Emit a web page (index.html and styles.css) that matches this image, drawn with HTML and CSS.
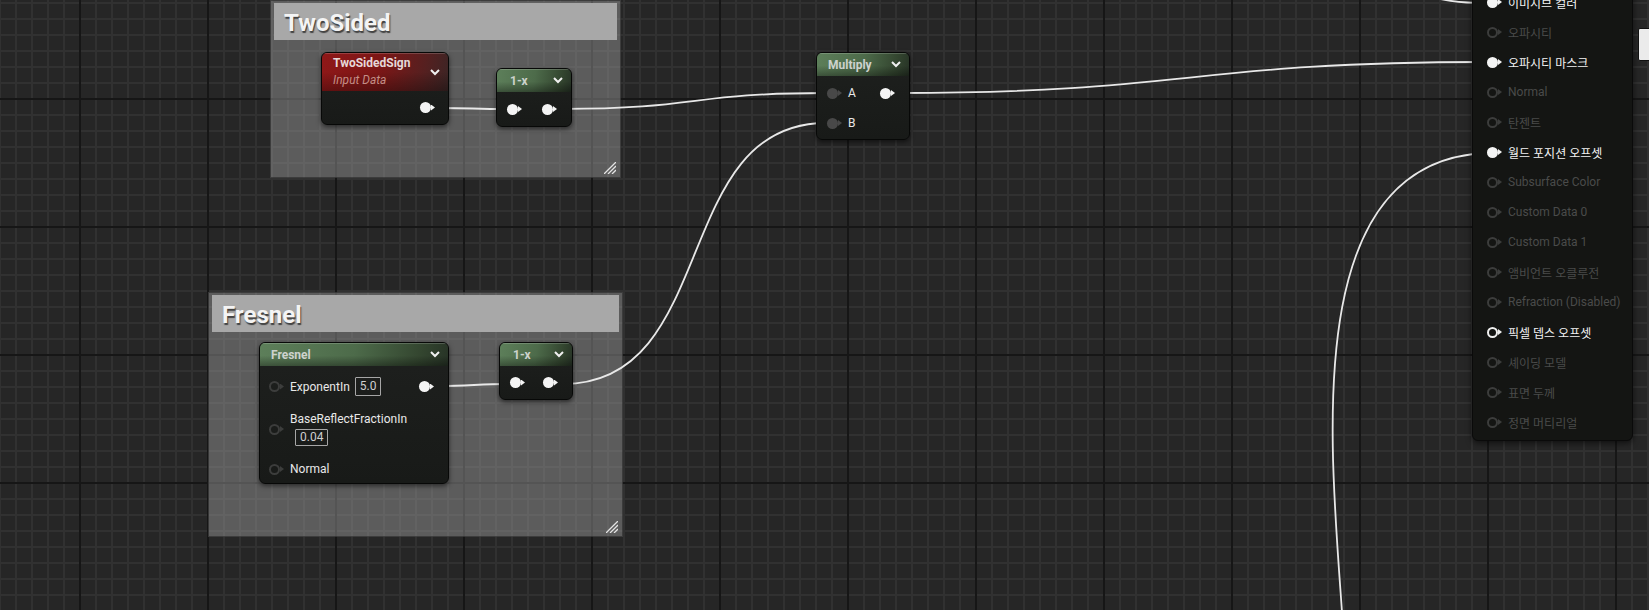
FILE: index.html
```html
<!DOCTYPE html>
<html lang="ko">
<head>
  <meta charset="UTF-8">
  <title>Material Graph</title>
  <link rel="stylesheet" href="styles.css">
</head>
<body>
  <div class="graph">

    <!-- comment boxes -->
    <div class="comment comment-twosided">
      <div class="comment-title">TwoSided</div>
      <div class="comment-body">
        <svg class="grip" width="12" height="12" viewBox="0 0 12 12"><path d="M12 0 L0 12 M12 4 L4 12 M12 8 L8 12"/></svg>
      </div>
    </div>
    <div class="comment comment-fresnel">
      <div class="comment-title">Fresnel</div>
      <div class="comment-body">
        <svg class="grip" width="12" height="12" viewBox="0 0 12 12"><path d="M12 0 L0 12 M12 4 L4 12 M12 8 L8 12"/></svg>
      </div>
    </div>

    <!-- wires -->
    <svg class="wires" width="1649" height="610" viewBox="0 0 1649 610">
      <path d="M439 108 C470 108 475 109 507 109"/>
      <path d="M561 109 C700 109 690 93 826 93"/>
      <path d="M439 386 C470 386 478 384 509 384"/>
      <path d="M563 384 C720 384 670 123 826 123"/>
      <path d="M899 93 C1190 93 1190 62 1487 62"/>
      <path d="M1400 -10 C1440 -1 1450 3 1487 3"/>
      <path d="M1342 612 C1330 440 1300 160 1487 153"/>
    </svg>

    <!-- TwoSidedSign -->
    <div class="node node-sign">
      <div class="node-head head-red">
        <div class="head-text">
          <span class="node-title">TwoSidedSign</span>
          <span class="node-sub">Input Data</span>
        </div>
        <svg class="chevron" width="10" height="7" viewBox="0 0 10 7"><path d="M1 1 L5 5 L9 1"/></svg>
      </div>
      <div class="node-body body-out">
        <span class="pin"></span>
      </div>
    </div>

    <!-- 1-x (top) -->
    <div class="node node-oneminus-a">
      <div class="node-head head-green">
        <span class="node-title">1-x</span>
        <svg class="chevron" width="10" height="7" viewBox="0 0 10 7"><path d="M1 1 L5 5 L9 1"/></svg>
      </div>
      <div class="node-body body-pair">
        <span class="pin"></span>
        <span class="pin"></span>
      </div>
    </div>

    <!-- Multiply -->
    <div class="node node-multiply">
      <div class="node-head head-green">
        <span class="node-title">Multiply</span>
        <svg class="chevron" width="10" height="7" viewBox="0 0 10 7"><path d="M1 1 L5 5 L9 1"/></svg>
      </div>
      <div class="node-body body-rows">
        <div class="pin-row">
          <span class="pin-label"><span class="pin dim"></span>A</span>
          <span class="pin"></span>
        </div>
        <div class="pin-row">
          <span class="pin-label"><span class="pin dim"></span>B</span>
        </div>
      </div>
    </div>

    <!-- Fresnel -->
    <div class="node node-fresnel">
      <div class="node-head head-green">
        <span class="node-title">Fresnel</span>
        <svg class="chevron" width="10" height="7" viewBox="0 0 10 7"><path d="M1 1 L5 5 L9 1"/></svg>
      </div>
      <div class="node-body body-fresnel">
        <div class="fresnel-row">
          <span class="pin-label"><span class="pin off"></span>ExponentIn <span class="value">5.0</span></span>
          <span class="pin"></span>
        </div>
        <div class="fresnel-row">
          <span class="pin-label"><span class="pin off"></span>
            <span class="stack">BaseReflectFractionIn<span class="value small">0.04</span></span>
          </span>
        </div>
        <div class="fresnel-row">
          <span class="pin-label"><span class="pin off"></span>Normal</span>
        </div>
      </div>
    </div>

    <!-- 1-x (bottom) -->
    <div class="node node-oneminus-b">
      <div class="node-head head-green">
        <span class="node-title">1-x</span>
        <svg class="chevron" width="10" height="7" viewBox="0 0 10 7"><path d="M1 1 L5 5 L9 1"/></svg>
      </div>
      <div class="node-body body-pair">
        <span class="pin"></span>
        <span class="pin"></span>
      </div>
    </div>

    <!-- material result node -->
    <div class="material">
      <div class="mat-row on"><span class="pin"></span>이미시브 컬러</div>
      <div class="mat-row"><span class="pin off"></span>오파시티</div>
      <div class="mat-row on"><span class="pin"></span>오파시티 마스크</div>
      <div class="mat-row"><span class="pin off"></span>Normal</div>
      <div class="mat-row"><span class="pin off"></span>탄젠트</div>
      <div class="mat-row on"><span class="pin"></span>월드 포지션 오프셋</div>
      <div class="mat-row"><span class="pin off"></span>Subsurface Color</div>
      <div class="mat-row"><span class="pin off"></span>Custom Data 0</div>
      <div class="mat-row"><span class="pin off"></span>Custom Data 1</div>
      <div class="mat-row"><span class="pin off"></span>앰비언트 오클루전</div>
      <div class="mat-row"><span class="pin off"></span>Refraction (Disabled)</div>
      <div class="mat-row on"><span class="pin off lit"></span>픽셀 뎁스 오프셋</div>
      <div class="mat-row"><span class="pin off"></span>셰이딩 모델</div>
      <div class="mat-row"><span class="pin off"></span>표면 두께</div>
      <div class="mat-row"><span class="pin off"></span>정면 머티리얼</div>
    </div>

    <div class="preview-edge"></div>
  </div>
</body>
</html>
```

FILE: styles.css
```css
body {
  margin: 0;
  background: #262626;
  font-family: 'Roboto', 'Noto Sans CJK KR', sans-serif;
}
.graph {
  position: relative;
  width: 1649px;
  height: 610px;
  overflow: hidden;
  background-color: #262626;
  background-image:
    linear-gradient(90deg, #161616 2px, transparent 2px),
    linear-gradient(#161616 2px, transparent 2px),
    linear-gradient(90deg, #313131 2px, transparent 2px),
    linear-gradient(#313131 2px, transparent 2px);
  background-size: 128px 128px, 128px 128px, 16px 16px, 16px 16px;
  background-position: 79px 0, 0 98px, 15px 0, 0 2px;
}

/* comment boxes */
.comment {
  position: absolute;
  display: flex;
  flex-direction: column;
  box-sizing: border-box;
  padding: 2px 3px 2px 3px;
  background: rgba(160, 160, 160, 0.45);
  border: 1px solid rgba(0, 0, 0, 0.35);
}
.comment-twosided {
  left: 270px;
  top: 0;
  width: 351px;
  height: 178px;
}
.comment-fresnel {
  left: 208px;
  top: 292px;
  width: 415px;
  height: 245px;
}
.comment-title {
  height: 37px;
  box-sizing: border-box;
  flex: none;
  background: #a8a8a8;
  color: #f4f4f4;
  font-weight: 700;
  font-size: 24px;
  line-height: 34px;
  padding: 3px 0 0 10px;
  text-shadow: 1px 2px 1px rgba(40, 40, 40, 0.8);
}
.comment-body {
  flex: 1;
  display: flex;
  align-items: flex-end;
  justify-content: flex-end;
}
.grip {
  margin: 0 1px 1px 0;
}
.grip path {
  stroke: #e4e4e4;
  stroke-width: 1.3;
  fill: none;
}

/* wires */
.wires {
  position: absolute;
  left: 0;
  top: 0;
}
.wires path {
  fill: none;
  stroke: #e8e8e8;
  stroke-width: 1.8;
}

/* nodes */
.node {
  position: absolute;
  box-sizing: border-box;
  display: flex;
  flex-direction: column;
  background: linear-gradient(#1e201e, #181a18);
  border: 1px solid #070807;
  border-radius: 6px;
  box-shadow: 0 2px 5px rgba(0, 0, 0, 0.55);
  overflow: hidden;
  color: #e8e8e8;
  font-size: 12px;
}
.node-head {
  flex: none;
  display: flex;
  align-items: center;
  justify-content: space-between;
  padding: 0 8px 0 11px;
  box-shadow: inset 0 1px 0 rgba(255, 255, 255, 0.18);
}
.head-green {
  height: 23px;
  background:
    linear-gradient(rgba(0, 0, 0, 0) 55%, rgba(0, 0, 0, 0.35)),
    linear-gradient(100deg, #5d7f5a 0%, #4d6b4a 50%, #33452f 85%, #273326 100%);
}
.head-red {
  height: 38px;
  background:
    linear-gradient(rgba(0, 0, 0, 0) 50%, rgba(0, 0, 0, 0.3)),
    linear-gradient(100deg, #8f1818 0%, #7c1616 45%, #552020 80%, #3b2525 100%);
}
.head-text {
  display: flex;
  flex-direction: column;
  line-height: 17px;
}
.node-title {
  font-weight: 700;
  color: #cdd2cd;
}
.head-red .node-title {
  color: #e6d8d8;
}
.node-sub {
  font-style: italic;
  color: #c48e86;
}
.chevron path {
  fill: none;
  stroke: #f0f0f0;
  stroke-width: 2;
}

.node-sign {
  left: 321px;
  top: 52px;
  width: 128px;
  height: 73px;
}
.node-oneminus-a {
  left: 496px;
  top: 68px;
  width: 76px;
  height: 59px;
}
.node-oneminus-b {
  left: 499px;
  top: 342px;
  width: 74px;
  height: 58px;
}
.node-oneminus-a .node-title,
.node-oneminus-b .node-title {
  margin-left: 2px;
}
.node-multiply {
  left: 816px;
  top: 52px;
  width: 94px;
  height: 88px;
}
.node-fresnel {
  left: 259px;
  top: 342px;
  width: 190px;
  height: 142px;
}

.node-body {
  flex: 1;
}
.body-out {
  display: flex;
  align-items: center;
  justify-content: flex-end;
  padding-right: 13px;
}
.body-pair {
  display: flex;
  align-items: center;
  justify-content: space-between;
  padding: 0 14px 0 10px;
}
.body-rows {
  display: flex;
  flex-direction: column;
  padding: 2px 14px 0 10px;
}
.pin-row {
  height: 30px;
  display: flex;
  align-items: center;
  justify-content: space-between;
}
.pin-label {
  display: flex;
  align-items: center;
  gap: 6px;
}
.body-fresnel {
  display: flex;
  flex-direction: column;
  gap: 16px;
  padding: 11px 14px 0 9px;
}
.fresnel-row {
  display: flex;
  align-items: center;
  justify-content: space-between;
}
.fresnel-row .pin-label {
  gap: 6px;
}
.stack {
  display: flex;
  flex-direction: column;
  gap: 3px;
  line-height: 14px;
}
.value {
  display: inline-block;
  border: 1px solid #a6a6a6;
  border-radius: 1px;
  padding: 0 4px;
  line-height: 17px;
  color: #cfcfcf;
  margin-left: -1px;
}
.value.small {
  align-self: flex-start;
  margin-left: 5px;
  line-height: 15px;
}

/* pins */
.pin {
  position: relative;
  flex: none;
  box-sizing: border-box;
  width: 11px;
  height: 11px;
  border-radius: 50%;
  background: #f4f4f4;
  margin-right: 4px;
}
.pin::after {
  content: '';
  position: absolute;
  left: 11px;
  top: 2.5px;
  width: 4px;
  height: 6px;
  background: #f4f4f4;
  clip-path: polygon(0 0, 100% 50%, 0 100%);
}
.pin.dim {
  background: #484848;
}
.pin.dim::after {
  background: #484848;
}
.pin.off {
  background: transparent;
  border: 2px solid #3c3d3c;
}
.pin.off::after {
  left: 9px;
  top: 0.5px;
  background: #3c3d3c;
}
.pin.off.lit {
  border-color: #f0f0f0;
}
.pin.off.lit::after {
  background: #f0f0f0;
}

/* material result node */
.material {
  position: absolute;
  left: 1472px;
  top: -42px;
  width: 161px;
  box-sizing: border-box;
  padding: 28px 0 3px 14px;
  background: #141513;
  border: 1px solid #0a0a0a;
  border-radius: 0 0 6px 6px;
  box-shadow: 0 2px 6px rgba(0, 0, 0, 0.6);
  font-size: 12px;
  color: #4a4b4a;
}
.mat-row {
  height: 30px;
  display: flex;
  align-items: center;
  gap: 6px;
  white-space: nowrap;
}
.mat-row.on {
  color: #f2f2f2;
}
.preview-edge {
  position: absolute;
  left: 1638px;
  top: 28px;
  width: 20px;
  height: 33px;
  box-sizing: border-box;
  background: #ebebeb;
  border: 1px solid #111;
  border-radius: 2px;
}
```
